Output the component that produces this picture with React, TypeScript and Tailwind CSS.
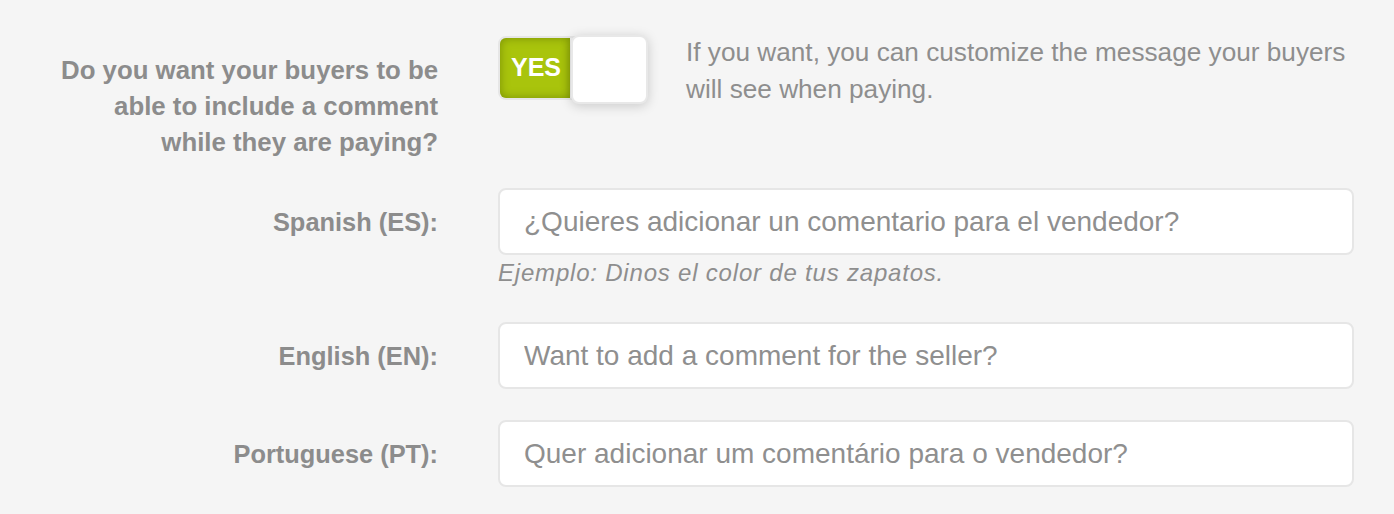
import { useState } from "react";

const font = { fontFamily: '"Liberation Sans", Arial, sans-serif' };

type LangRowProps = {
  label: string;
  placeholder: string;
};

function LangRow({ label, placeholder }: LangRowProps) {
  return (
    <div className="flex items-center">
      <label className="w-[438px] shrink-0 text-right text-[25.4px] font-bold leading-[36px] text-[#8c8c8c]">
        {label}
      </label>
      <input
        type="text"
        placeholder={placeholder}
        className="ml-[60px] h-[67px] flex-1 rounded-[8px] border-2 border-[#e6e6e6] bg-white px-[24px] text-[28px] text-[#555] outline-none placeholder:text-[#8f8f8f]"
      />
    </div>
  );
}

function Toggle({ on, onChange }: { on: boolean; onChange: (v: boolean) => void }) {
  return (
    <button
      type="button"
      onClick={() => onChange(!on)}
      className="relative mt-[2px] h-[64px] w-[150px] shrink-0 rounded-[8px] border-2 border-[#e6e6e6] bg-[#f0f0f0]"
    >
      <span className="absolute left-0 top-0 flex h-[60px] w-[70px] items-center justify-center rounded-l-[6px] bg-[#a9c40c] pl-[2px] text-[25px] font-bold text-white shadow-[inset_0_0_10px_rgba(90,110,0,0.6)]">
        YES
      </span>
      <span className="absolute -top-[3px] right-[-2px] h-[69px] w-[77px] rounded-[8px] border-2 border-[#e8e8e8] bg-white shadow-[0_2px_12px_rgba(0,0,0,0.18)]" />
    </button>
  );
}

export default function App() {
  const [on, setOn] = useState(true);

  return (
    <div style={font} className="min-h-[514px] w-full bg-[#f5f5f5] pr-[40px] pt-[34px]">
      <div className="flex items-start">
        <p className="w-[438px] shrink-0 pl-[52px] pt-[18px] text-right text-[25.8px] font-bold leading-[36px] text-[#8c8c8c]">
          Do you want your buyers to be able to include a comment while they are paying?
        </p>
        <div className="ml-[60px] flex flex-1 items-start">
          <Toggle on={on} onChange={setOn} />
          <p className="ml-[38px] text-[26.2px] leading-[37px] text-[#8e8e8e]">
            If you want, you can customize the message your buyers will see when paying.
          </p>
        </div>
      </div>

      <div className="mt-[28px]">
        <LangRow label="Spanish (ES):" placeholder="¿Quieres adicionar un comentario para el vendedor?" />
        <p className="ml-[498px] mt-[4px] text-[24px] italic leading-[28px] tracking-[0.8px] text-[#8e8e8e]">
          Ejemplo: Dinos el color de tus zapatos.
        </p>
      </div>

      <div className="mt-[35px]">
        <LangRow label="English (EN):" placeholder="Want to add a comment for the seller?" />
      </div>

      <div className="mt-[31px]">
        <LangRow label="Portuguese (PT):" placeholder="Quer adicionar um comentário para o vendedor?" />
      </div>
    </div>
  );
}
